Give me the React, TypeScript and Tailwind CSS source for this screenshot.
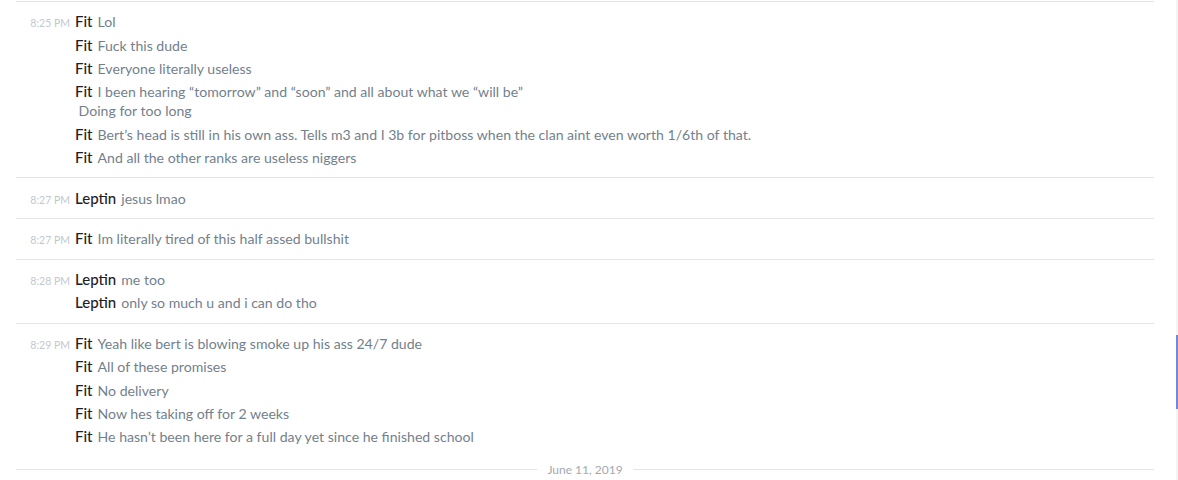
import React from "react";

type Msg = { time?: string; user: string; text: React.ReactNode };
type Group = Msg[];

const groups: Group[] = [
  [
    { time: "8:25 PM", user: "Fit", text: "Lol" },
    { user: "Fit", text: "Fuck this dude" },
    { user: "Fit", text: "Everyone literally useless" },
    {
      user: "Fit",
      text: (
        <>
          I been hearing “tomorrow” and “soon” and all about what we “will be”
          <br />
          {"\u00a0Doing for too long"}
        </>
      ),
    },
    {
      user: "Fit",
      text: "Bert’s head is still in his own ass. Tells m3 and I 3b for pitboss when the clan aint even worth 1/6th of that.",
    },
    { user: "Fit", text: "And all the other ranks are useless niggers" },
  ],
  [{ time: "8:27 PM", user: "Leptin", text: "jesus lmao" }],
  [{ time: "8:27 PM", user: "Fit", text: "Im literally tired of this half assed bullshit" }],
  [
    { time: "8:28 PM", user: "Leptin", text: "me too" },
    { user: "Leptin", text: "only so much u and i can do tho" },
  ],
  [
    { time: "8:29 PM", user: "Fit", text: "Yeah like bert is blowing smoke up his ass 24/7 dude" },
    { user: "Fit", text: "All of these promises" },
    { user: "Fit", text: "No delivery" },
    { user: "Fit", text: "Now hes taking off for 2 weeks" },
    { user: "Fit", text: "He hasn’t been here for a full day yet since he finished school" },
  ],
];

function Message({ m }: { m: Msg }) {
  return (
    <div className="flex items-baseline py-[2px]">
      <div className="w-[59px] shrink-0 pr-[5px] text-right text-[10.5px] text-[#c3c8cd] leading-none">
        {m.time ?? ""}
      </div>
      <div className="text-[14.1px] leading-[19.25px] text-[#737f8d]">
        <span className="font-medium text-[#1e2124] text-[15px] leading-none mr-[5px]">{m.user}</span>
        {m.text}
      </div>
    </div>
  );
}

export default function App() {
  return (
    <div
      className="flex w-[1178px] h-[480px] bg-white overflow-hidden"
      style={{ fontFamily: "Lato, 'Open Sans', sans-serif" }}
    >
      <div className="ml-4 w-[1138px] flex flex-col">
        <div className="h-px shrink-0 bg-[#e3e5e8] mt-[1px]" />
        {groups.map((g, i) => (
          <React.Fragment key={i}>
            <div className="py-[8.25px]">
              {g.map((m, j) => (
                <Message key={j} m={m} />
              ))}
            </div>
            {i < groups.length - 1 && <div className="h-px shrink-0 bg-[#e3e5e8]" />}
          </React.Fragment>
        ))}
        <div className="flex items-center mt-[5px]">
          <div className="flex-1 h-px bg-[#e3e5e8]" />
          <div className="px-[10px] text-[12px] text-[#a3a9b0] leading-4">June 11, 2019</div>
          <div className="flex-1 h-px bg-[#e3e5e8]" />
        </div>
      </div>
      <div className="flex-1" />
      <div className="w-[2px] h-full bg-[#f4f4f5] flex flex-col">
        <div className="mt-[335px] h-[74px] w-[2px] bg-[#7289da]" />
      </div>
    </div>
  );
}
